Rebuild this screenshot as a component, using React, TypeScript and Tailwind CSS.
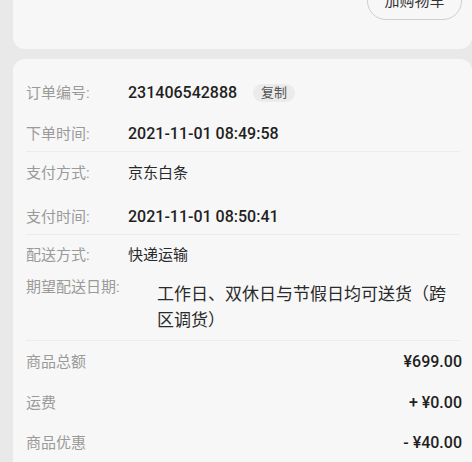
import React from "react";

const font = { fontFamily: '"Roboto", "Noto Sans CJK SC", sans-serif' };

function Label({ children }: { children: React.ReactNode }) {
  return <div className="w-[102px] shrink-0 text-[15px] text-[#9a9a9a] leading-[22px]">{children}</div>;
}

function Divider() {
  return <div className="h-px bg-[#ececec] mr-[2px]" />;
}

export default function App() {
  return (
    <div className="w-[472px] h-[462px] bg-[#e9e9e9] overflow-hidden" style={font}>
      <div className="ml-[13px] w-[459px] h-[49px] bg-[#f7f7f7] rounded-b-[12px] flex justify-end items-start">
        <div className="-mt-[18px] mr-[10px] h-[38px] w-[95px] rounded-full border border-[#cfcfcf] flex items-center justify-center text-[15px] text-[#333]">
          加购物车
        </div>
      </div>
      <div className="mt-[10px] ml-[13px] w-[459px] h-[420px] bg-[#f7f7f7] rounded-t-[12px] pl-[13px] pr-[10px] pt-[14px]">
        <div className="h-[40px] flex items-center">
          <Label>订单编号:</Label>
          <div className="text-[16px] font-medium text-[#1f1f1f]">231406542888</div>
          <div className="ml-[16px] h-[18px] w-[42px] rounded-full bg-[#ebebeb] flex items-center justify-center text-[13px] text-[#555]">复制</div>
        </div>
        <div className="h-[38px] pt-[3px] flex items-center">
          <Label>下单时间:</Label>
          <div className="text-[16px] font-medium text-[#1f1f1f]">2021-11-01 08:49:58</div>
        </div>
        <Divider />
        <div className="h-[42px] flex items-center">
          <Label>支付方式:</Label>
          <div className="text-[15px] text-[#2a2a2a]">京东白条</div>
        </div>
        <div className="h-[40px] pt-[5px] flex items-center">
          <Label>支付时间:</Label>
          <div className="text-[16px] font-medium text-[#1f1f1f]">2021-11-01 08:50:41</div>
        </div>
        <Divider />
        <div className="h-[40px] flex items-center">
          <Label>配送方式:</Label>
          <div className="text-[15px] text-[#2a2a2a]">快递运输</div>
        </div>
        <div className="flex items-start pt-[1px] pb-[7px]">
          <div className="w-[131px] shrink-0 text-[15px] text-[#9a9a9a] leading-[22px]">期望配送日期:</div>
          <div className="mt-[5px] flex-1 text-[17px] leading-[26px] text-[#2a2a2a]">工作日、双休日与节假日均可送货（跨区调货）</div>
        </div>
        <Divider />
        <div className="h-[42px] flex items-center justify-between">
          <div className="text-[15px] text-[#9a9a9a]">商品总额</div>
          <div className="text-[16px] font-medium text-[#1f1f1f]">¥699.00</div>
        </div>
        <div className="h-[40px] flex items-center justify-between">
          <div className="text-[15px] text-[#9a9a9a]">运费</div>
          <div className="text-[16px] font-medium text-[#1f1f1f]">+ ¥0.00</div>
        </div>
        <div className="h-[40px] flex items-center justify-between">
          <div className="text-[15px] text-[#9a9a9a]">商品优惠</div>
          <div className="text-[16px] font-medium text-[#1f1f1f]">- ¥40.00</div>
        </div>
      </div>
    </div>
  );
}
